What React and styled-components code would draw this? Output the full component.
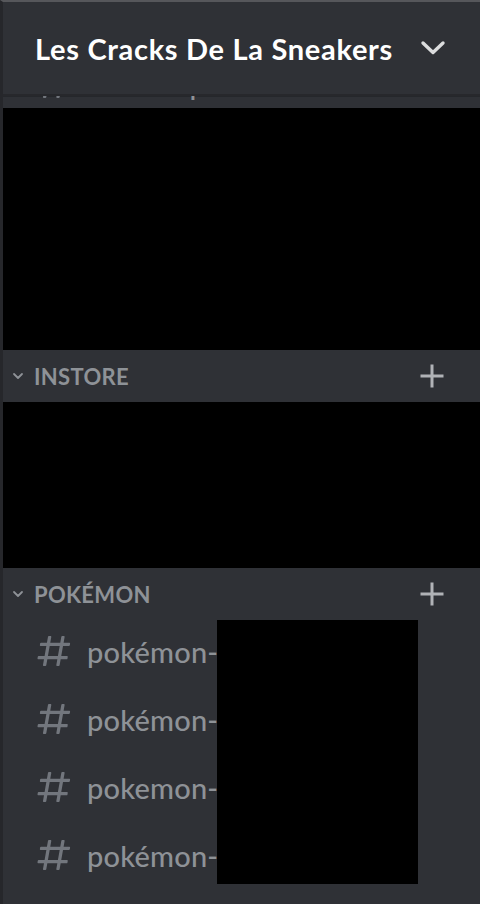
import React from "react";
import styled, { createGlobalStyle } from "styled-components";

const Global = createGlobalStyle`
  html, body { margin: 0; padding: 0; background: #2f3136; overflow: hidden; }
  * { box-sizing: border-box; }
`;

const Sidebar = styled.div`
  width: 480px;
  height: 904px;
  background: #2f3136;
  border-top: 2px solid #56575b;
  border-left: 3px solid #26272b;
  display: flex;
  flex-direction: column;
  overflow: hidden;
  font-family: "Lato", "Open Sans", "Noto Sans", sans-serif;
`;

const Header = styled.header`
  height: 94px;
  flex: none;
  display: flex;
  align-items: center;
  justify-content: space-between;
  padding: 0 34px 0 32px;
  border-bottom: 2px solid #27282c;
  box-shadow: 0 1px 0 rgba(0, 0, 0, 0.2);
`;

const Title = styled.h1`
  margin: 0;
  color: #ffffff;
  font-size: 29px;
  font-weight: 700;
  letter-spacing: 0.7px;
`;

const Peek = styled.div`
  height: 12px;
  flex: none;
  overflow: hidden;
  display: flex;
  align-items: flex-end;
`;

const Redacted = styled.div`
  flex: none;
  height: ${(p) => p.$h}px;
  background: #000;
`;

const Category = styled.div`
  height: 52px;
  flex: none;
  display: flex;
  align-items: center;
  padding: 0 36px 0 8px;
  color: #8e9297;
`;

const CatName = styled.span`
  flex: 1;
  margin-left: 9px;
  font-size: 22px;
  font-weight: 700;
  text-transform: uppercase;
  letter-spacing: 0.3px;
`;

const ChannelList = styled.div`
  position: relative;
  flex: none;
`;

const Row = styled.div`
  height: ${(p) => p.$h || 68}px;
  display: flex;
  align-items: center;
  padding: 0 0 ${(p) => (p.$pb ?? 6)}px 31px;
  color: #8e9297;
`;

const ChannelName = styled.span`
  margin-left: 13px;
  font-size: 29px;
  font-weight: 500;
  letter-spacing: 0.2px;
  white-space: nowrap;
`;

const Cover = styled.div`
  position: absolute;
  left: 214px;
  top: 0;
  width: 201px;
  height: 264px;
  background: #000;
`;

const Hash = () => (
  <svg width="40" height="40" viewBox="0 0 24 24" fill="#72767d">
    <path
      fillRule="evenodd"
      d="M5.88657 21C5.57547 21 5.3399 20.7189 5.39427 20.4126L6.00001 17H2.59511C2.28449 17 2.04905 16.7198 2.10259 16.4138L2.27759 15.4138C2.31946 15.1746 2.52722 15 2.77011 15H6.35001L7.41001 9H4.00511C3.69449 9 3.45905 8.71977 3.51259 8.41381L3.68759 7.41381C3.72946 7.17456 3.93722 7 4.18011 7H7.76001L8.39677 3.41262C8.43914 3.17391 8.64664 3 8.88907 3H9.87344C10.1845 3 10.4201 3.28107 10.3657 3.58738L9.76001 7H15.76L16.3968 3.41262C16.4391 3.17391 16.6466 3 16.8891 3H17.8734C18.1845 3 18.4201 3.28107 18.3657 3.58738L17.76 7H21.1649C21.4755 7 21.711 7.28023 21.6574 7.58619L21.4824 8.58619C21.4406 8.82544 21.2328 9 20.9899 9H17.41L16.35 15H19.7549C20.0655 15 20.301 15.2802 20.2474 15.5862L20.0724 16.5862C20.0306 16.8254 19.8228 17 19.5799 17H16L15.3632 20.5874C15.3209 20.8261 15.1134 21 14.8709 21H13.8866C13.5755 21 13.3399 20.7189 13.3943 20.4126L14 17H8.00001L7.36325 20.5874C7.32088 20.8261 7.11337 21 6.87094 21H5.88657ZM9.41045 9L8.35045 15H14.3504L15.4104 9H9.41045Z"
    />
  </svg>
);

const HeaderChevron = () => (
  <svg width="26" height="16" viewBox="0 0 26 16" fill="none">
    <path d="M3 3 L13 12.5 L23 3" stroke="#dcddde" strokeWidth="3.4" strokeLinecap="round" strokeLinejoin="round" />
  </svg>
);

const SmallChevron = () => (
  <svg width="14" height="10" viewBox="0 0 14 10" fill="none">
    <path d="M3 3 L7 7 L11 3" stroke="#8e9297" strokeWidth="1.8" strokeLinecap="round" strokeLinejoin="round" />
  </svg>
);

const Plus = () => (
  <svg width="24" height="24" viewBox="0 0 24 24" fill="none">
    <path d="M12 0.5 V23.5 M0.5 12 H23.5" stroke="#b0b2b6" strokeWidth="3" />
  </svg>
);

const CategoryHeader = ({ name }) => (
  <Category>
    <SmallChevron />
    <CatName>{name}</CatName>
    <Plus />
  </Category>
);

export default function App() {
  const channels = ["pokémon-", "pokémon-", "pokemon-", "pokémon-"];
  return (
    <>
      <Global />
      <Sidebar>
        <Header>
          <Title>Les Cracks De La Sneakers</Title>
          <HeaderChevron />
        </Header>
        <Peek>
          <Row $h={50} $pb={0}>
            <Hash />
            <ChannelName>release-p</ChannelName>
          </Row>
        </Peek>
        <Redacted $h={242} />
        <CategoryHeader name="Instore" />
        <Redacted $h={166} />
        <CategoryHeader name="Pokémon" />
        <ChannelList>
          {channels.map((c, i) => (
            <Row key={i}>
              <Hash />
              <ChannelName>{c}</ChannelName>
            </Row>
          ))}
          <Cover />
        </ChannelList>
      </Sidebar>
    </>
  );
}
